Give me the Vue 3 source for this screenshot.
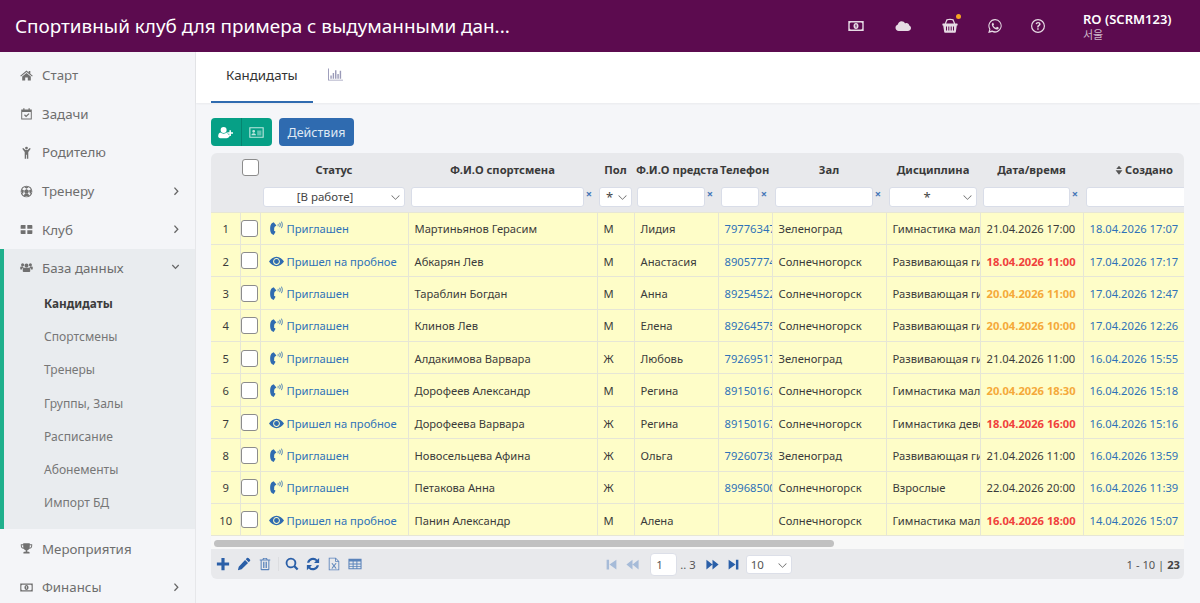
<template>
  <div class="app">
    <header class="topbar">
      <h1 class="title">Спортивный клуб для примера с выдуманными дан...</h1>
      <div class="top-icons">
        <svg class="ic top-ic" viewBox="0 0 16 16"><path :d="icons.money" fill-rule="evenodd" /></svg>
        <svg class="ic top-ic" viewBox="0 0 16 16"><path :d="icons.cloud" fill-rule="evenodd" /></svg>
        <span class="basket">
          <svg class="ic top-ic" viewBox="0 0 16 16"><path :d="icons.basket" fill-rule="evenodd" /></svg>
          <i class="dot"></i>
        </span>
        <svg class="ic top-ic" viewBox="0 0 16 16"><path :d="icons.whatsapp" fill-rule="evenodd" /></svg>
        <svg class="ic top-ic" viewBox="0 0 16 16"><path :d="icons.help" fill-rule="evenodd" /></svg>
      </div>
      <div class="user">
        <div class="user-name">RO (SCRM123)</div>
        <div class="user-city">서울</div>
      </div>
    </header>

    <div class="body">
      <aside class="sidebar">
        <template v-for="item in menu" :key="item.label">
          <div class="menu-block" :class="{ open: item.children }">
            <div class="menu-item">
              <svg class="ic menu-ic" viewBox="0 0 16 16"><path :d="icons[item.icon]" fill-rule="evenodd" /></svg>
              <span class="menu-label">{{ item.label }}</span>
              <svg v-if="item.arrow" class="ic menu-arrow" viewBox="0 0 16 16">
                <path :d="item.children ? icons.chevDown : icons.chevRight" />
              </svg>
            </div>
            <div v-for="(sub, i) in item.children" :key="sub" class="sub-item" :class="{ active: i === 0 }">{{ sub }}</div>
          </div>
        </template>
      </aside>

      <main class="content">
        <nav class="tabs">
          <a class="tab active">Кандидаты</a>
          <a class="tab chart">
            <svg class="ic chart-ic" viewBox="0 0 16 16"><path :d="icons.bars" /></svg>
          </a>
        </nav>

        <section class="page">
          <div class="toolbar">
            <div class="btn-group">
              <button class="btn green">
                <svg class="ic btn-ic" viewBox="0 0 16 16"><path :d="icons.userPlus" fill-rule="evenodd" /></svg>
              </button>
              <button class="btn green">
                <svg class="ic btn-ic" viewBox="0 0 16 16"><path :d="icons.idCard" fill-rule="evenodd" /></svg>
              </button>
            </div>
            <button class="btn blue">Действия</button>
          </div>

          <div class="grid">
            <div class="grid-scroll">
              <table class="table">
                <colgroup>
                  <col v-for="w in colWidths" :key="w.id" :style="{ width: w.px + 'px' }" />
                </colgroup>
                <thead>
                  <tr class="head-row">
                    <th></th>
                    <th class="cb-cell"><span class="checkbox head-cb"></span></th>
                    <th>Статус</th>
                    <th>Ф.И.О спортсмена</th>
                    <th>Пол</th>
                    <th class="clip">Ф.И.О представителя</th>
                    <th class="clip">Телефон</th>
                    <th>Зал</th>
                    <th>Дисциплина</th>
                    <th>Дата/время</th>
                    <th class="sorted">
                      <svg class="ic sort-ic" viewBox="0 0 16 16"><path :d="icons.sort" /></svg>Создано
                    </th>
                  </tr>
                  <tr class="filter-row">
                    <th></th>
                    <th></th>
                    <th><div class="filter"><div class="fselect">[В работе]<svg class="ic fchev" viewBox="0 0 16 16"><path :d="icons.chevThin" /></svg></div></div></th>
                    <th><div class="filter"><input class="finput" /><span class="clear">×</span></div></th>
                    <th class="narrow"><div class="filter"><div class="fselect star">*<svg class="ic fchev" viewBox="0 0 16 16"><path :d="icons.chevThin" /></svg></div></div></th>
                    <th><div class="filter"><input class="finput" /><span class="clear">×</span></div></th>
                    <th><div class="filter"><input class="finput" /><span class="clear">×</span></div></th>
                    <th><div class="filter"><input class="finput" /><span class="clear">×</span></div></th>
                    <th><div class="filter"><div class="fselect star">*<svg class="ic fchev" viewBox="0 0 16 16"><path :d="icons.chevThin" /></svg></div></div></th>
                    <th><div class="filter"><input class="finput" /><span class="clear">×</span></div></th>
                    <th><div class="filter"><input class="finput" /></div></th>
                  </tr>
                </thead>
                <tbody>
                  <tr v-for="(row, i) in rows" :key="i">
                    <td class="num">{{ i + 1 }}</td>
                    <td class="cb-cell"><span class="checkbox"></span></td>
                    <td class="status">
                      <svg class="ic status-ic" viewBox="0 0 16 16">
                        <path :d="row.came ? icons.eye : icons.phone" fill-rule="evenodd" />
                      </svg>
                      <a class="link">{{ row.came ? 'Пришел на пробное' : 'Приглашен' }}</a>
                    </td>
                    <td>{{ row.name }}</td>
                    <td>{{ row.sex }}</td>
                    <td>{{ row.parent }}</td>
                    <td><a class="link">{{ row.phone }}</a></td>
                    <td>{{ row.hall }}</td>
                    <td>{{ row.disc }}</td>
                    <td :class="row.mark">{{ row.date }}</td>
                    <td><a class="link">{{ row.created }}</a></td>
                  </tr>
                </tbody>
              </table>
            </div>

            <div class="scrollbar"><div class="thumb"></div></div>

            <div class="pager">
              <div class="pager-left">
                <svg class="ic foot-ic" viewBox="0 0 16 16"><path :d="icons.plus" /></svg>
                <svg class="ic foot-ic" viewBox="0 0 16 16"><path :d="icons.pencil" /></svg>
                <svg class="ic foot-ic light" viewBox="0 0 16 16"><path :d="icons.trash" fill-rule="evenodd" /></svg>
                <span class="foot-sep"></span>
                <svg class="ic foot-ic" viewBox="0 0 16 16"><path :d="icons.search" fill-rule="evenodd" /></svg>
                <svg class="ic foot-ic" viewBox="0 0 16 16"><path :d="icons.refresh" /></svg>
                <svg class="ic foot-ic light" viewBox="0 0 16 16"><path :d="icons.excel" fill-rule="evenodd" /></svg>
                <svg class="ic foot-ic light" viewBox="0 0 16 16"><path :d="icons.table" fill-rule="evenodd" /></svg>
              </div>
              <div class="pager-center">
                <svg class="ic page-ic off" viewBox="0 0 16 16"><path :d="icons.first" /></svg>
                <svg class="ic page-ic off" viewBox="0 0 16 16"><path :d="icons.prev" /></svg>
                <input class="page-input" value="1" />
                <span class="page-total">.. 3</span>
                <svg class="ic page-ic" viewBox="0 0 16 16"><path :d="icons.next" /></svg>
                <svg class="ic page-ic" viewBox="0 0 16 16"><path :d="icons.last" /></svg>
                <div class="page-size">10<svg class="ic fchev" viewBox="0 0 16 16"><path :d="icons.chevThin" /></svg></div>
              </div>
              <div class="pager-right">1 - 10 | <b>23</b></div>
            </div>
          </div>
        </section>
      </main>
    </div>
  </div>
</template>

<script setup>
// all icons are drawn on a 16x16 box
const icons = {
  home: 'M8 1.800 .3 8.200l.9 1.100L8 3.700l6.800 5.600.9-1.100-3-2.500V2.500h-2v1.700z M2.700 9.200 8 4.900l5.300 4.300V14.200H9.600v-3.600H6.400v3.600H2.700z',
  tasks: 'M1.500 3H4V1.500h1.500V3h5V1.500H12V3h2.500v12.500h-13z M2.700 6.300v8h10.600v-8z M5 10l1-1 1.500 1.500L10.700 7.600l1 1-4.200 4.100z',
  parent: 'M8 .8a1.700 1.700 0 1 0 0 3.400A1.700 1.700 0 0 0 8 .8z M2.800 3.400 4 2.400 6.800 4.800h2.400L12 2.400l1.200 1-3 4v8.200H8.500v-4.800h-1v4.800H5.800V7.400z',
  soccer: 'M8 .8a7.200 7.200 0 1 0 0 14.400A7.200 7.200 0 0 0 8 .8z M8 2.100a5.900 5.900 0 1 1 0 11.800A5.900 5.900 0 0 1 8 2.100z M8 5l3 2.200-1.200 3.500H6.200L5 7.200z M5 2.400h6L8 4.500z M13.600 5.200l.6 4.300-2 1.400-1.100-4z M2.400 5.200l2.500 1.700-1.100 4-2-1.400z M4.600 13.200l1-2.100h4.800l1 2.100L8 14.400z',
  grid: 'M.8 3.500a1 1 0 0 1 1-1h5v4.600h-6z M9 2.500h5.200a1 1 0 0 1 1 1v3.600H9z M.8 8.900h6v4.600h-5a1 1 0 0 1-1-1z M9 8.900h6.200v3.600a1 1 0 0 1-1 1H9z',
  users: 'M8 3a2.500 2.500 0 1 0 0 5 2.500 2.500 0 0 0 0-5z M3.200 2.800a1.900 1.900 0 1 0 0 3.800 1.900 1.900 0 0 0 0-3.800z M12.800 2.800a1.900 1.900 0 1 0 0 3.800 1.900 1.900 0 0 0 0-3.800z M5 8.400h6c1 0 1.600.8 1.600 2v2.300c0 .6-.5.9-1 .9H4.400c-.5 0-1-.3-1-.9v-2.300c0-1.200.6-2 1.600-2z M.3 7.400c0-.5.5-.7 1-.7h2.300c.2.600.6 1 1 1.300-1.300.3-2 1.300-2.100 2.600H1.300c-.6 0-1-.3-1-.8z M15.700 7.400c0-.5-.5-.7-1-.7h-2.300c-.2.600-.6 1-1 1.300 1.300.3 2 1.300 2.100 2.600h1.200c.6 0 1-.3 1-.8z',
  trophy: 'M4 1.500h8v1.300h3v2c0 2-1.500 3.200-3.500 3.500C10.900 9.400 10 10 9 10.300V12h1.500c.8 0 1.300.5 1.300 1.300v.7H4.200v-.7c0-.8.5-1.300 1.300-1.300H7v-1.700C6 10 5.100 9.400 4.500 8.300 2.500 8 1 6.800 1 4.800v-2h3z M2.200 4v.8c0 1.100.8 1.900 1.900 2.200C4 6.100 4 5 4 4z M13.800 4H12c0 1 0 2.100-.1 3 1.100-.3 1.900-1.100 1.900-2.200z',
  money: 'M.3 3h15.400v10H.3z M2.600 4.600 1.700 5.500v5l.9.9h10.800l.9-.9v-5l-.9-.9z M8 5c1.500 0 2.500 1.300 2.500 3S9.500 11 8 11 5.500 9.700 5.500 8 6.500 5 8 5z M7.200 6.700v.7h.4v2.100h.9V6.500H8z',
  cloud: 'M12.700 13H3.800C1.900 13 .5 11.600.5 9.800c0-1.500 1-2.800 2.400-3.200C3.100 4.700 4.700 3.300 6.600 3.300c1.500 0 2.800.8 3.500 2.100.4-.2.900-.3 1.300-.3 1.500 0 2.700 1.100 2.900 2.500 1 .4 1.700 1.400 1.700 2.500 0 1.600-1.300 2.900-3.300 2.900z',
  basket: 'M4.500 1.300C6.800.6 9.200.6 11.500 1.300l1.700 4.200H15c.4 0 .6.3.6.6v.9c0 .3-.2.6-.6.6h-.2l-1 6.400c0 .4-.4.7-.8.7H3c-.4 0-.8-.3-.8-.7l-1-6.400H1c-.4 0-.6-.3-.6-.6v-.9c0-.3.2-.6.6-.6h1.800z M5.300 2.400 4.100 5.500h7.800l-1.200-3.100c-1.800-.4-3.600-.4-5.400 0z M4 8.500v4h1v-4z M6.300 8.500v4h1v-4z M8.700 8.500v4h1v-4z M11 8.500v4h1v-4z',
  whatsapp: 'M8.200 1a6.800 6.800 0 0 0-5.900 10.200L1.200 15l3.900-1a6.800 6.800 0 1 0 3.100-13z M8.200 2.300a5.500 5.500 0 1 1-2.900 10.200l-.3-.1-2 .5.5-1.900-.2-.3A5.500 5.500 0 0 1 8.200 2.300z M5.800 4.800c-.5.3-1 .9-1 1.800 0 1.100.8 2.200 1.200 2.700 1 1.400 2.300 2.100 3.500 2.300.9.1 1.900-.4 2.100-1.100.1-.4.1-.8 0-.9l-1.500-.8c-.2-.1-.3 0-.4.1l-.6.8c-.1.1-.2.1-.4 0-1-.4-1.800-1.100-2.300-2-.1-.2 0-.3.1-.4l.4-.5c.1-.2.1-.3 0-.5l-.6-1.400c-.1-.3-.3-.3-.5-.1z',
  help: 'M8 1a7 7 0 1 0 0 14A7 7 0 0 0 8 1z M8 2.200a5.800 5.800 0 1 1 0 11.600A5.800 5.800 0 0 1 8 2.200z M5.600 6c.2-1.300 1.200-2 2.500-2 1.400 0 2.500.9 2.500 2.100 0 1-.6 1.500-1.200 1.900-.5.3-.8.6-.8 1.100v.3H7.200v-.5c0-.9.5-1.400 1.100-1.800.5-.3.8-.5.8-1 0-.4-.5-.8-1-.8-.6 0-1 .3-1.200 1z M7.200 10.300h1.500v1.500H7.200z',
  chevRight: 'M5.300 1.900 7 .3l6.700 7.200L7 14.700l-1.700-1.600 5.200-5.600z',
  chevDown: 'M1.500 4.300 3.100 2.700 8 8l4.900-5.300 1.600 1.600L8 11.300z',
  chevThin: 'M2 5.300 2.700 4.600 8 10l5.300-5.400.7.700L8 11.400z',
  bars: 'M0 1.500h1v12h15v1H0z M2.500 9h1.500v3.500H2.500z M5 6.500h1.500v6H5z M7.500 3.500H9v9H7.500z M10 7.500h1.500v5H10z M12.500 4h1.500v8.500h-1.500z',
  userPlus: 'M6 2a3.200 3.200 0 1 0 0 6.400A3.200 3.200 0 0 0 6 2z M2.500 8.100C3.400 8.900 4.600 9.300 6 9.300s2.600-.4 3.500-1.200c.8.300 1.200 1 1.300 2h1.500V12c-.5 1-1.600 2-3.200 2H2.400C1.100 14 .2 13.200.2 12c0-1.800.8-3.500 2.300-3.900z M12.200 5.500h1.600v2.300H16v1.500h-2.200v2.300h-1.600V9.300H10V7.800h2.200z',
  idCard: 'M.3 2.300h15.400v11.400H.3z M1.500 3.500v9h13v-9z M5 5.200a1.500 1.500 0 1 1 0 3 1.500 1.500 0 0 1 0-3z M2.600 11c0-1.300.9-2.200 2.400-2.200s2.400.9 2.400 2.200z M8.700 6h4.500v1H8.700z M8.700 8h4.500v1H8.700z M8.700 10h4.500v1H8.700z',
  sort: 'M8 1 12.500 6.500H3.500z M2.500 8.500h11L8 15.500z',
  phone: 'M5 1.300 3 2.400C1.700 3.500 1.200 5.800 1.200 8.200s.5 4.500 1.800 5.600l2 1.100 2-3.500-1.800-1.300C5.700 9.500 5.500 8.800 5.500 8.100s.2-1.400.6-2l1.800-1.200z M9.200 3.300l.6-.3c.5.800.5 2 0 2.800l-.6-.3c.3-.7.3-1.500 0-2.200z M11 2l.7-.3c1 1.400 1 3.500 0 4.900l-.7-.3c.7-1.200.7-3.100 0-4.300z M12.900.7l.7-.3c1.300 1.900 1.300 5.300 0 7.300l-.7-.3c1.100-1.800 1.100-4.900 0-6.700z',
  eye: 'M8 3C4.600 3 1.700 5.300 0 8c1.700 2.700 4.600 5 8 5s6.300-2.300 8-5c-1.700-2.700-4.600-5-8-5z M8 4.200c2 0 3.600 1.700 3.600 3.800S10 11.800 8 11.800 4.400 10.100 4.400 8 6 4.200 8 4.200z M8 5.400A2.600 2.600 0 1 0 8 10.600 2.600 2.600 0 0 0 8 5.400z',
  plus: 'M6.200 1h3.600v5.200H15v3.600H9.800V15H6.200V9.800H1V6.200h5.200z',
  pencil: 'M11.300 1.200a1.300 1.300 0 0 1 1.800 0l1.700 1.700a1.300 1.300 0 0 1 0 1.800L13.400 6 10 2.600z M9.200 3.400 12.600 6.800 5.300 14.100 1 15.200 2 11z',
  trash: 'M5.800 1h4.400l.8 1.800h3v1.200h-1v10c0 .6-.4 1-1 1H4c-.6 0-1-.4-1-1V4H2V2.800h3z M6.400 2.800h3.200l-.3-.7H6.700z M4.200 4v9.800h7.600V4z M5.800 5.500h1v7h-1z M7.500 5.500h1v7h-1z M9.200 5.500h1v7h-1z',
  search: 'M6.800.8a6 6 0 1 0 3.300 11l3.400 3.400 1.900-1.900-3.400-3.400A6 6 0 0 0 6.800.8z M6.800 2.800a4 4 0 1 1 0 8 4 4 0 0 1 0-8z',
  refresh: 'M15 1v5.800H9.200l2.100-2.100A4.600 4.600 0 0 0 3.700 6.500H1.200A7 7 0 0 1 13 3z M1 15V9.200h5.800l-2.100 2.100A4.600 4.600 0 0 0 12.300 9.500h2.500A7 7 0 0 1 3 13z',
  excel: 'M2 .8h8l4 4V15.200H2z M3 1.800v12.400h10V5.500H9.300V1.800z M10.300 2.400v2.100h2.100z M5 7h1.600L8 9.400 9.400 7H11L8.800 10 11 13H9.400L8 10.700 6.600 13H5l2.200-3z',
  table: 'M.5 2h15v12H.5z M1.700 5.200v2.200h3.600V5.200z M6.400 5.200v2.200h3.200V5.200z M10.700 5.200v2.200h3.600V5.200z M1.700 8.500v2h3.600v-2z M6.400 8.500v2h3.200v-2z M10.700 8.500v2h3.600v-2z M1.700 11.500v1.300h3.600v-1.300z M6.400 11.500v1.300h3.200v-1.300z M10.700 11.500v1.300h3.600v-1.300z',
  first: 'M2 2h3v12H2z M14 2v12L5.500 8z',
  prev: 'M8 2v12L.5 8z M15.500 2v12L8 8z',
  next: 'M.5 2 8 8l-7.500 6z M8 2l7.500 6L8 14z',
  last: 'M2 2l8.500 6L2 14z M11 2h3v12h-3z',
}

const menu = [
  { label: 'Старт', icon: 'home' },
  { label: 'Задачи', icon: 'tasks' },
  { label: 'Родителю', icon: 'parent' },
  { label: 'Тренеру', icon: 'soccer', arrow: true },
  { label: 'Клуб', icon: 'grid', arrow: true },
  {
    label: 'База данных',
    icon: 'users',
    arrow: true,
    children: ['Кандидаты', 'Спортсмены', 'Тренеры', 'Группы, Залы', 'Расписание', 'Абонементы', 'Импорт БД'],
  },
  { label: 'Мероприятия', icon: 'trophy' },
  { label: 'Финансы', icon: 'money', arrow: true },
]

const colWidths = [
  { id: 'num', px: 29 },
  { id: 'cb', px: 20 },
  { id: 'status', px: 148 },
  { id: 'name', px: 189 },
  { id: 'sex', px: 37 },
  { id: 'parent', px: 84 },
  { id: 'phone', px: 54 },
  { id: 'hall', px: 114 },
  { id: 'disc', px: 94 },
  { id: 'date', px: 103 },
  { id: 'created', px: 110 },
]

const SOLN = 'Солнечногорск'
const ZEL = 'Зеленоград'
const RAZV = 'Развивающая гимнастика'
const MAL = 'Гимнастика малыши'

const rows = [
  { name: 'Мартиньянов Герасим', sex: 'М', parent: 'Лидия', phone: '79776347001', hall: ZEL, disc: MAL, date: '21.04.2026 17:00', created: '18.04.2026 17:07' },
  { came: true, name: 'Абкарян Лев', sex: 'М', parent: 'Анастасия', phone: '89057774002', hall: SOLN, disc: RAZV, date: '18.04.2026 11:00', mark: 'late', created: '17.04.2026 17:17' },
  { name: 'Тараблин Богдан', sex: 'М', parent: 'Анна', phone: '89254522003', hall: SOLN, disc: RAZV, date: '20.04.2026 11:00', mark: 'soon', created: '17.04.2026 12:47' },
  { name: 'Клинов Лев', sex: 'М', parent: 'Елена', phone: '89264575004', hall: SOLN, disc: RAZV, date: '20.04.2026 10:00', mark: 'soon', created: '17.04.2026 12:26' },
  { name: 'Алдакимова Варвара', sex: 'Ж', parent: 'Любовь', phone: '79269517005', hall: ZEL, disc: RAZV, date: '21.04.2026 11:00', created: '16.04.2026 15:55' },
  { name: 'Дорофеев Александр', sex: 'М', parent: 'Регина', phone: '89150167006', hall: SOLN, disc: MAL, date: '20.04.2026 18:30', mark: 'soon', created: '16.04.2026 15:18' },
  { came: true, name: 'Дорофеева Варвара', sex: 'Ж', parent: 'Регина', phone: '89150167006', hall: SOLN, disc: 'Гимнастика девочки', date: '18.04.2026 16:00', mark: 'late', created: '16.04.2026 15:16' },
  { name: 'Новосельцева Афина', sex: 'Ж', parent: 'Ольга', phone: '79260738008', hall: ZEL, disc: RAZV, date: '21.04.2026 11:00', created: '16.04.2026 13:59' },
  { name: 'Петакова Анна', sex: 'Ж', parent: '', phone: '89968500009', hall: SOLN, disc: 'Взрослые', date: '22.04.2026 20:00', created: '16.04.2026 11:39' },
  { came: true, name: 'Панин Александр', sex: 'М', parent: 'Алена', phone: '', hall: SOLN, disc: MAL, date: '16.04.2026 18:00', mark: 'late', created: '14.04.2026 15:07' },
]
</script>

<style>
html,
body {
  margin: 0;
  overflow: hidden;
}
</style>

<style scoped>
.app {
  width: 1200px;
  height: 603px;
  display: flex;
  flex-direction: column;
  overflow: hidden;
  font-family: "Noto Sans", "Noto Sans CJK KR", sans-serif;
  color: #333;
  background: #f5f6f9;
}

.ic {
  display: block;
  fill: currentColor;
  flex: none;
}

/* top bar */
.topbar {
  height: 52px;
  flex: none;
  display: flex;
  align-items: center;
  background: #5c0b4f;
  color: #fff;
  padding-left: 15px;
  box-sizing: border-box;
}

.title {
  margin: 0;
  flex: 1;
  font-size: 18.9px;
  font-weight: 400;
  line-height: 52px;
  white-space: nowrap;
}

.top-icons {
  display: flex;
  align-items: center;
  margin-right: 37px;
  color: #e6dbe4;
}

.top-icons > :nth-child(2),
.top-icons > :nth-child(3) {
  margin-left: 31px;
}

.top-icons > :nth-child(4) {
  margin-left: 29px;
}

.top-icons > :nth-child(5) {
  margin-left: 27px;
}

.top-ic {
  width: 16px;
  height: 16px;
}

.basket {
  position: relative;
  display: block;
}

.dot {
  position: absolute;
  top: -4px;
  right: -3px;
  width: 5px;
  height: 5px;
  border-radius: 50%;
  background: #f5a623;
}

.user {
  width: 117px;
  padding-top: 1px;
}

.user-name {
  font-size: 13px;
  font-weight: 600;
  line-height: 17px;
}

.user-city {
  font-size: 11px;
  line-height: 14px;
  color: #cdb8c9;
}

/* sidebar */
.body {
  flex: 1;
  display: flex;
  min-height: 0;
}

.sidebar {
  width: 196px;
  flex: none;
  box-sizing: border-box;
  background: #f4f5f8;
  border-right: 1px solid #e6e7ea;
  padding-top: 4px;
  overflow: hidden;
}

.menu-item {
  height: 38.6px;
  display: flex;
  align-items: center;
  padding-left: 20px;
  color: #6e6e6e;
  font-size: 13.3px;
}

.menu-ic {
  width: 13px;
  height: 13px;
  margin-right: 9px;
  color: #707070;
}

.menu-label {
  flex: 1;
}

.menu-arrow {
  width: 9px;
  height: 9px;
  margin-right: 15px;
  color: #666;
}

.menu-block.open {
  background: #e9ecef;
  border-left: 4px solid #1fb08c;
  padding-bottom: 10px;
}

.menu-block.open .menu-item {
  height: 38px;
  padding-left: 16px;
}

.sub-item {
  height: 33.2px;
  line-height: 33.2px;
  padding-left: 40px;
  font-size: 12.1px;
  color: #777;
}

.sub-item.active {
  font-weight: 700;
  font-size: 11.8px;
  color: #3c3c3c;
}

/* tabs */
.content {
  flex: 1;
  min-width: 0;
  display: flex;
  flex-direction: column;
}

.tabs {
  height: 51px;
  flex: none;
  display: flex;
  background: #fff;
  padding-left: 15px;
  box-sizing: border-box;
  box-shadow: 0 1px 2px rgba(0, 0, 0, 0.05);
}

.tab {
  height: 51px;
  box-sizing: border-box;
  padding: 0 15px;
  display: flex;
  align-items: center;
  font-size: 13.3px;
  color: #333;
  padding-bottom: 4px;
}

.tab.active {
  border-bottom: 2px solid #2f6bb0;
  padding-bottom: 3px;
}

.chart-ic {
  width: 15px;
  height: 15px;
  color: #9a9ab8;
  margin-bottom: 2px;
}

/* toolbar */
.page {
  flex: 1;
  padding: 15px 16px 0 15px;
}

.toolbar {
  display: flex;
  gap: 7px;
  margin-bottom: 7px;
}

.btn-group {
  display: flex;
}

.btn {
  height: 28px;
  border: none;
  margin: 0;
  font-family: inherit;
  color: #fff;
  display: flex;
  align-items: center;
  justify-content: center;
}

.btn.green {
  width: 30.5px;
  background: #06a086;
  padding: 0;
}

.btn.green:first-child {
  border-radius: 4px 0 0 4px;
  border-right: 1px solid #058570;
}

.btn.green:last-child {
  border-radius: 0 4px 4px 0;
  color: #bfe7df;
}

.btn-ic {
  width: 15px;
  height: 15px;
}

.btn.blue {
  width: 75px;
  background: #2f6bb0;
  border-radius: 4px;
  font-size: 12.5px;
  color: #dfe9f4;
}

/* grid */
.grid {
  width: 973px;
  height: 426px;
  border-radius: 6px;
  background: #e8e9ec;
  overflow: hidden;
}

.grid-scroll {
  height: 383px;
  overflow: hidden;
}

.table {
  table-layout: fixed;
  border-collapse: collapse;
  width: 982px;
  font-size: 11.2px;
}

.head-row {
  height: 27px;
}

.head-row th {
  font-size: 11.2px;
  font-weight: 700;
  color: #3a3a3a;
  text-align: center;
  white-space: nowrap;
  overflow: hidden;
  padding: 5px 0 0;
}

.head-row th.clip {
  text-align: left;
  padding-left: 2px;
}

.head-row th.sorted {
  text-align: right;
  padding-right: 20px;
}

.sort-ic {
  display: inline-block;
  width: 10px;
  height: 10px;
  margin-right: 1px;
  vertical-align: -1px;
  color: #555;
}

.filter-row {
  height: 32px;
}

.filter-row th {
  padding: 0 3px 5px;
  font-weight: 400;
  vertical-align: bottom;
}

.filter-row th.narrow {
  padding: 0 2px 5px;
}

.filter {
  display: flex;
  align-items: center;
}

.finput,
.fselect {
  flex: 1;
  min-width: 0;
  height: 20px;
  box-sizing: border-box;
  margin: 0;
  border: 1px solid #d9dde8;
  border-radius: 3px;
  background: #fff;
  padding: 0;
}

.fselect {
  position: relative;
  display: flex;
  align-items: center;
  justify-content: center;
  font-size: 11.5px;
  color: #444;
  padding-right: 18px;
}

.fselect.star {
  font-size: 13px;
  padding-right: 12px;
}

.fchev {
  position: absolute;
  right: 3px;
  top: 4px;
  width: 11px;
  height: 11px;
  color: #555;
}

.clear {
  flex: none;
  width: 10px;
  text-align: center;
  font-size: 11px;
  font-weight: 700;
  line-height: 14px;
  margin-top: -5px;
  color: #4778b8;
}

tbody tr {
  height: 32.4px;
  background: #fefdc8;
}

tbody td {
  border: 1px solid #e6e6d6;
  border-left: 1px solid #e3e4d6;
  padding: 1px 0 0 6px;
  white-space: nowrap;
  overflow: hidden;
  color: #3b3b3b;
}

tbody td:first-child {
  border-left: none;
}

tbody td.num {
  padding: 1px 0 0 1px;
  text-align: center;
}

.cb-cell {
  padding: 0 !important;
  text-align: center;
}

.checkbox {
  display: inline-block;
  width: 17px;
  height: 17px;
  margin-right: 2px;
  box-sizing: border-box;
  border: 1px solid #8c8c8c;
  border-radius: 3px;
  background: #fff;
  vertical-align: middle;
}

.head-cb {
  margin-top: 2px;
  margin-left: 0;
  margin-right: 0;
}

tbody td.status {
  padding-left: 8px;
}

.status-ic {
  display: inline-block;
  width: 15px;
  height: 15px;
  margin-right: 3px;
  vertical-align: -3px;
  color: #2f6bb0;
}

.link {
  color: #2f72b8;
}

tbody td.late {
  color: #f0413c;
  font-weight: 700;
}

tbody td.soon {
  color: #f5a93a;
  font-weight: 700;
}

/* scrollbar */
.scrollbar {
  height: 13px;
  box-sizing: border-box;
  padding: 4px 0 0 3px;
  background: #f8f8f8;
}

.thumb {
  width: 620px;
  height: 7px;
  border-radius: 4px;
  background: #c1c1c1;
}

/* pager */
.pager {
  height: 30px;
  display: grid;
  grid-template-columns: 1fr auto 1fr;
  align-items: center;
  padding: 0 4px 0 5px;
}

.pager-left {
  display: flex;
  align-items: center;
  gap: 7px;
}

.foot-ic {
  width: 14px;
  height: 14px;
  color: #2a5fa8;
}

.foot-ic.light {
  color: #5b84bb;
}

.foot-sep {
  width: 1px;
  height: 14px;
  margin: 0 -1px;
  background: #dcdde0;
}

.pager-center {
  display: flex;
  align-items: center;
  margin-left: -3px;
}

.page-ic {
  width: 13px;
  height: 13px;
  margin: 0 4px;
  color: #2a5fa8;
}

.page-ic.off {
  color: #a6bbd8;
}

.page-input {
  width: 27px;
  height: 23px;
  box-sizing: border-box;
  margin: 0 0 0 7px;
  border: 1px solid #dcdfe8;
  border-radius: 4px;
  background: #fff;
  padding: 0 0 0 5px;
  font: 11.5px "Noto Sans", sans-serif;
  color: #555;
}

.page-total {
  font-size: 11.2px;
  color: #555;
  margin: 0 6px 0 3px;
}

.page-size {
  position: relative;
  width: 46px;
  height: 19px;
  line-height: 18px;
  box-sizing: border-box;
  margin-left: 2px;
  padding-left: 4px;
  border: 1px solid #dcdfe8;
  border-radius: 3px;
  background: #fff;
  font-size: 11.5px;
  color: #555;
}

.pager-right {
  text-align: right;
  font-size: 11.2px;
  color: #555;
}

.pager-right b {
  color: #444;
}
</style>
